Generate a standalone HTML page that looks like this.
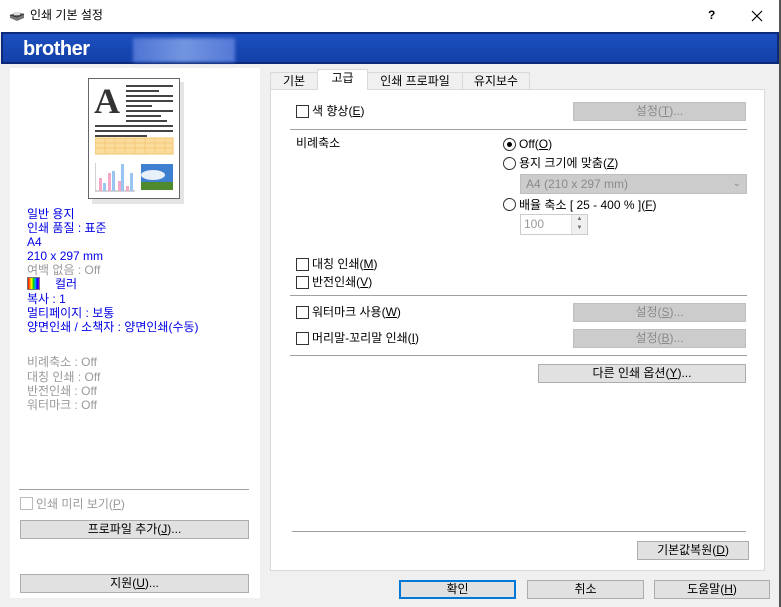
<!DOCTYPE html>
<html><head><meta charset="utf-8"><style>
*{margin:0;padding:0;box-sizing:border-box}
body{width:781px;height:607px;overflow:hidden;background:#f0f0f0;font-family:"Liberation Sans","Noto Sans CJK KR","NanumGothic",sans-serif;font-size:12px;color:#000;position:relative}
.a{position:absolute;white-space:nowrap;line-height:14px}
.t{position:absolute;left:0;top:0;width:781px;height:32px;background:#fff}
.ban{position:absolute;left:1px;top:32px;width:778px;height:32px;background:linear-gradient(#1c4fc0,#1440a8);border:2px solid #0d2a78}
.blur{position:absolute;left:130px;top:4px;width:102px;height:24px;background:linear-gradient(90deg,#4e74d4,#7395e0,#5478d6);filter:blur(1.5px)}
.lp{position:absolute;left:10px;top:68px;width:250px;height:530px;background:#fff}
.b{color:#0000e6}.g{color:#9a9a9a}
.btn{position:absolute;background:#e1e1e1;border:1px solid #adadad;text-align:center;line-height:17px}
.dis{position:absolute;background:#cccccc;border:1px solid #bfbfbf;text-align:center;line-height:17px;color:#8a8a8a}
.cb{position:absolute;width:13px;height:13px;border:1px solid #333;background:#fff}
.rb{position:absolute;width:13px;height:13px;border:1px solid #333;border-radius:50%;background:#fff}
.ln{position:absolute;height:1px;background:#a0a0a0}
.tab{position:absolute;top:72px;height:18px;border:1px solid #d9d9d9;border-bottom:none;background:#f0f0f0;text-align:center;line-height:16px}
u{text-decoration:underline}
</style></head><body>
<div class="t"></div>
<svg class="a" style="left:8px;top:10px" width="18" height="12" viewBox="0 0 18 12"><path d="M2 5 L9 2 L16 4 L16 8 L9 11 L2 8Z" fill="#777"/><path d="M2 5 L9 7 L16 4" fill="none" stroke="#333"/><rect x="6" y="2" width="6" height="3" fill="#ddd"/></svg>
<div class="a" style="left:30px;top:8px;font-size:12px">인쇄 기본 설정</div>
<div class="a" style="left:708px;top:8px;font-weight:bold">?</div>
<svg class="a" style="left:751px;top:10px" width="12" height="12"><path d="M1 1L11 11M11 1L1 11" stroke="#000" stroke-width="1.2"/></svg>
<div class="ban"><div class="a" style="left:20px;top:4px;color:#fff;font-weight:bold;font-size:20px;line-height:22px;letter-spacing:-0.5px">brother</div><div class="blur"></div></div>

<div class="lp"></div>
<div class="a" style="left:92px;top:82px;width:92px;height:122px;background:#e4e4e4"></div>
<div class="a" style="left:88px;top:78px;width:92px;height:121px;background:#fff;border:1px solid #666"></div>
<div class="a" style="left:94px;top:82px;font-family:'Liberation Serif',serif;font-size:36px;line-height:38px;font-weight:bold;color:#333">A</div>
<svg class="a" style="left:95px;top:83px" width="80" height="110">
<g stroke="#444" stroke-width="2"><path d="M31 3H78M31 8H64M31 13H78M31 18H78M31 23H57M31 28H78M31 33H66M31 38H72"/><path d="M0 43H78M0 48H78M0 53H52M0 58H78M0 63H78"/></g>
<rect x="0" y="55" width="78" height="16" fill="#fbdc9d" stroke="#f3c36e"/><path d="M0 60H78M0 65H78M10 55V71M20 55V71M30 55V71M40 55V71M50 55V71M60 55V71M70 55V71" stroke="#f3c36e" stroke-width="0.7"/>
<path d="M0 80V108H40" stroke="#aaa" fill="none"/><g fill="#f3a8c8"><rect x="4" y="95" width="3" height="13"/><rect x="13" y="90" width="3" height="18"/><rect x="23" y="98" width="3" height="10"/><rect x="31" y="103" width="3" height="5"/></g><g fill="#98c6f0"><rect x="8" y="100" width="3" height="8"/><rect x="17" y="88" width="3" height="20"/><rect x="26" y="81" width="3" height="27"/><rect x="35" y="90" width="3" height="18"/></g>
<rect x="46" y="81" width="32" height="26" fill="#3f7fd0"/><ellipse cx="58" cy="92" rx="12" ry="5" fill="#e8f0fa"/><rect x="46" y="99" width="32" height="8" fill="#4e8a2c"/>
</svg>
<div class="a b" style="left:27px;top:207px">일반 용지</div>
<div class="a b" style="left:27px;top:221px">인쇄 품질 : 표준</div>
<div class="a b" style="left:27px;top:235px">A4</div>
<div class="a b" style="left:27px;top:249px">210 x 297 mm</div>
<div class="a g" style="left:27px;top:263px">여백 없음 : Off</div>
<div class="a" style="left:27px;top:277px;width:13px;height:13px;border:1px solid #777;background:linear-gradient(90deg,#f00,#f80,#ff0,#0c0,#0af,#00f,#a0f)"></div>
<div class="a b" style="left:55px;top:277px">컬러</div>
<div class="a b" style="left:27px;top:292px">복사 : 1</div>
<div class="a b" style="left:27px;top:306px">멀티페이지 : 보통</div>
<div class="a b" style="left:27px;top:320px">양면인쇄 / 소책자 : 양면인쇄(수동)</div>
<div class="a g" style="left:27px;top:355px">비례축소 : Off</div>
<div class="a g" style="left:27px;top:370px">대칭 인쇄 : Off</div>
<div class="a g" style="left:27px;top:384px">반전인쇄 : Off</div>
<div class="a g" style="left:27px;top:398px">워터마크 : Off</div>
<div class="ln" style="left:19px;top:489px;width:230px"></div>
<div class="cb" style="left:20px;top:497px;border-color:#bbb"></div>
<div class="a g" style="left:36px;top:497px">인쇄 미리 보기(<u>P</u>)</div>
<div class="btn" style="left:20px;top:520px;width:229px;height:19px">프로파일 추가(<u>J</u>)...</div>
<div class="btn" style="left:20px;top:574px;width:229px;height:19px">지원(<u>U</u>)...</div>

<div class="tab" style="left:270px;width:48px">기본</div>
<div class="tab" style="left:367px;width:96px">인쇄 프로파일</div>
<div class="tab" style="left:462px;width:68px">유지보수</div>
<div class="a" style="left:270px;top:89px;width:495px;height:482px;background:#fff;border:1px solid #d9d9d9"></div>
<div class="tab" style="left:317px;top:69px;width:51px;height:21px;background:#fff;z-index:2">고급</div>

<div class="cb" style="left:296px;top:105px"></div><div class="a" style="left:312px;top:104px">색 향상(<u>E</u>)</div>
<div class="dis" style="left:573px;top:102px;width:173px;height:19px">설정(<u>T</u>)...</div>
<div class="ln" style="left:290px;top:129px;width:457px"></div>
<div class="a" style="left:296px;top:136px">비례축소</div>
<div class="rb" style="left:503px;top:138px"></div><div class="a" style="left:507px;top:142px;width:5px;height:5px;border-radius:50%;background:#000"></div>
<div class="a" style="left:519px;top:137px">Off(<u>O</u>)</div>
<div class="rb" style="left:503px;top:157px"></div><div class="a" style="left:519px;top:156px">용지 크기에 맞춤(<u>Z</u>)</div>
<div class="dis" style="left:520px;top:174px;width:227px;height:20px;text-align:left;padding-left:5px;line-height:18px">A4 (210 x 297 mm)<span style="position:absolute;right:5px;top:0;font-size:10px">&#8964;</span></div>
<div class="rb" style="left:503px;top:198px"></div><div class="a" style="left:519px;top:198px">배율 축소 [ 25 - 400 % ](<u>F</u>)</div>
<div class="a" style="left:520px;top:214px;width:68px;height:21px;border:1px solid #ccc;background:#fff"></div>
<div class="a g" style="left:524px;top:217px">100</div>
<div class="a" style="left:571px;top:215px;width:16px;height:19px;border-left:1px solid #ddd;background:#f0f0f0;font-size:6px;line-height:9px;text-align:center;color:#666">▲<br>▼</div>

<div class="cb" style="left:296px;top:258px"></div><div class="a" style="left:312px;top:257px">대칭 인쇄(<u>M</u>)</div>
<div class="cb" style="left:296px;top:276px"></div><div class="a" style="left:312px;top:275px">반전인쇄(<u>V</u>)</div>
<div class="ln" style="left:290px;top:295px;width:457px"></div>
<div class="cb" style="left:296px;top:306px"></div><div class="a" style="left:312px;top:305px">워터마크 사용(<u>W</u>)</div>
<div class="dis" style="left:573px;top:303px;width:173px;height:19px">설정(<u>S</u>)...</div>
<div class="cb" style="left:296px;top:332px"></div><div class="a" style="left:312px;top:331px">머리말-꼬리말 인쇄(<u>I</u>)</div>
<div class="dis" style="left:573px;top:329px;width:173px;height:19px">설정(<u>B</u>)...</div>
<div class="ln" style="left:290px;top:355px;width:457px"></div>
<div class="btn" style="left:538px;top:364px;width:208px;height:19px">다른 인쇄 옵션(<u>Y</u>)...</div>
<div class="ln" style="left:292px;top:531px;width:454px"></div>
<div class="btn" style="left:637px;top:541px;width:112px;height:19px">기본값복원(<u>D</u>)</div>

<div class="btn" style="left:399px;top:580px;width:117px;height:19px;border:2px solid #0078d7;line-height:15px">확인</div>
<div class="btn" style="left:527px;top:580px;width:117px;height:19px">취소</div>
<div class="btn" style="left:654px;top:580px;width:116px;height:19px">도움말(<u>H</u>)</div>
<div class="a" style="left:779px;top:0;width:2px;height:607px;background:#555"></div>
</body></html>
